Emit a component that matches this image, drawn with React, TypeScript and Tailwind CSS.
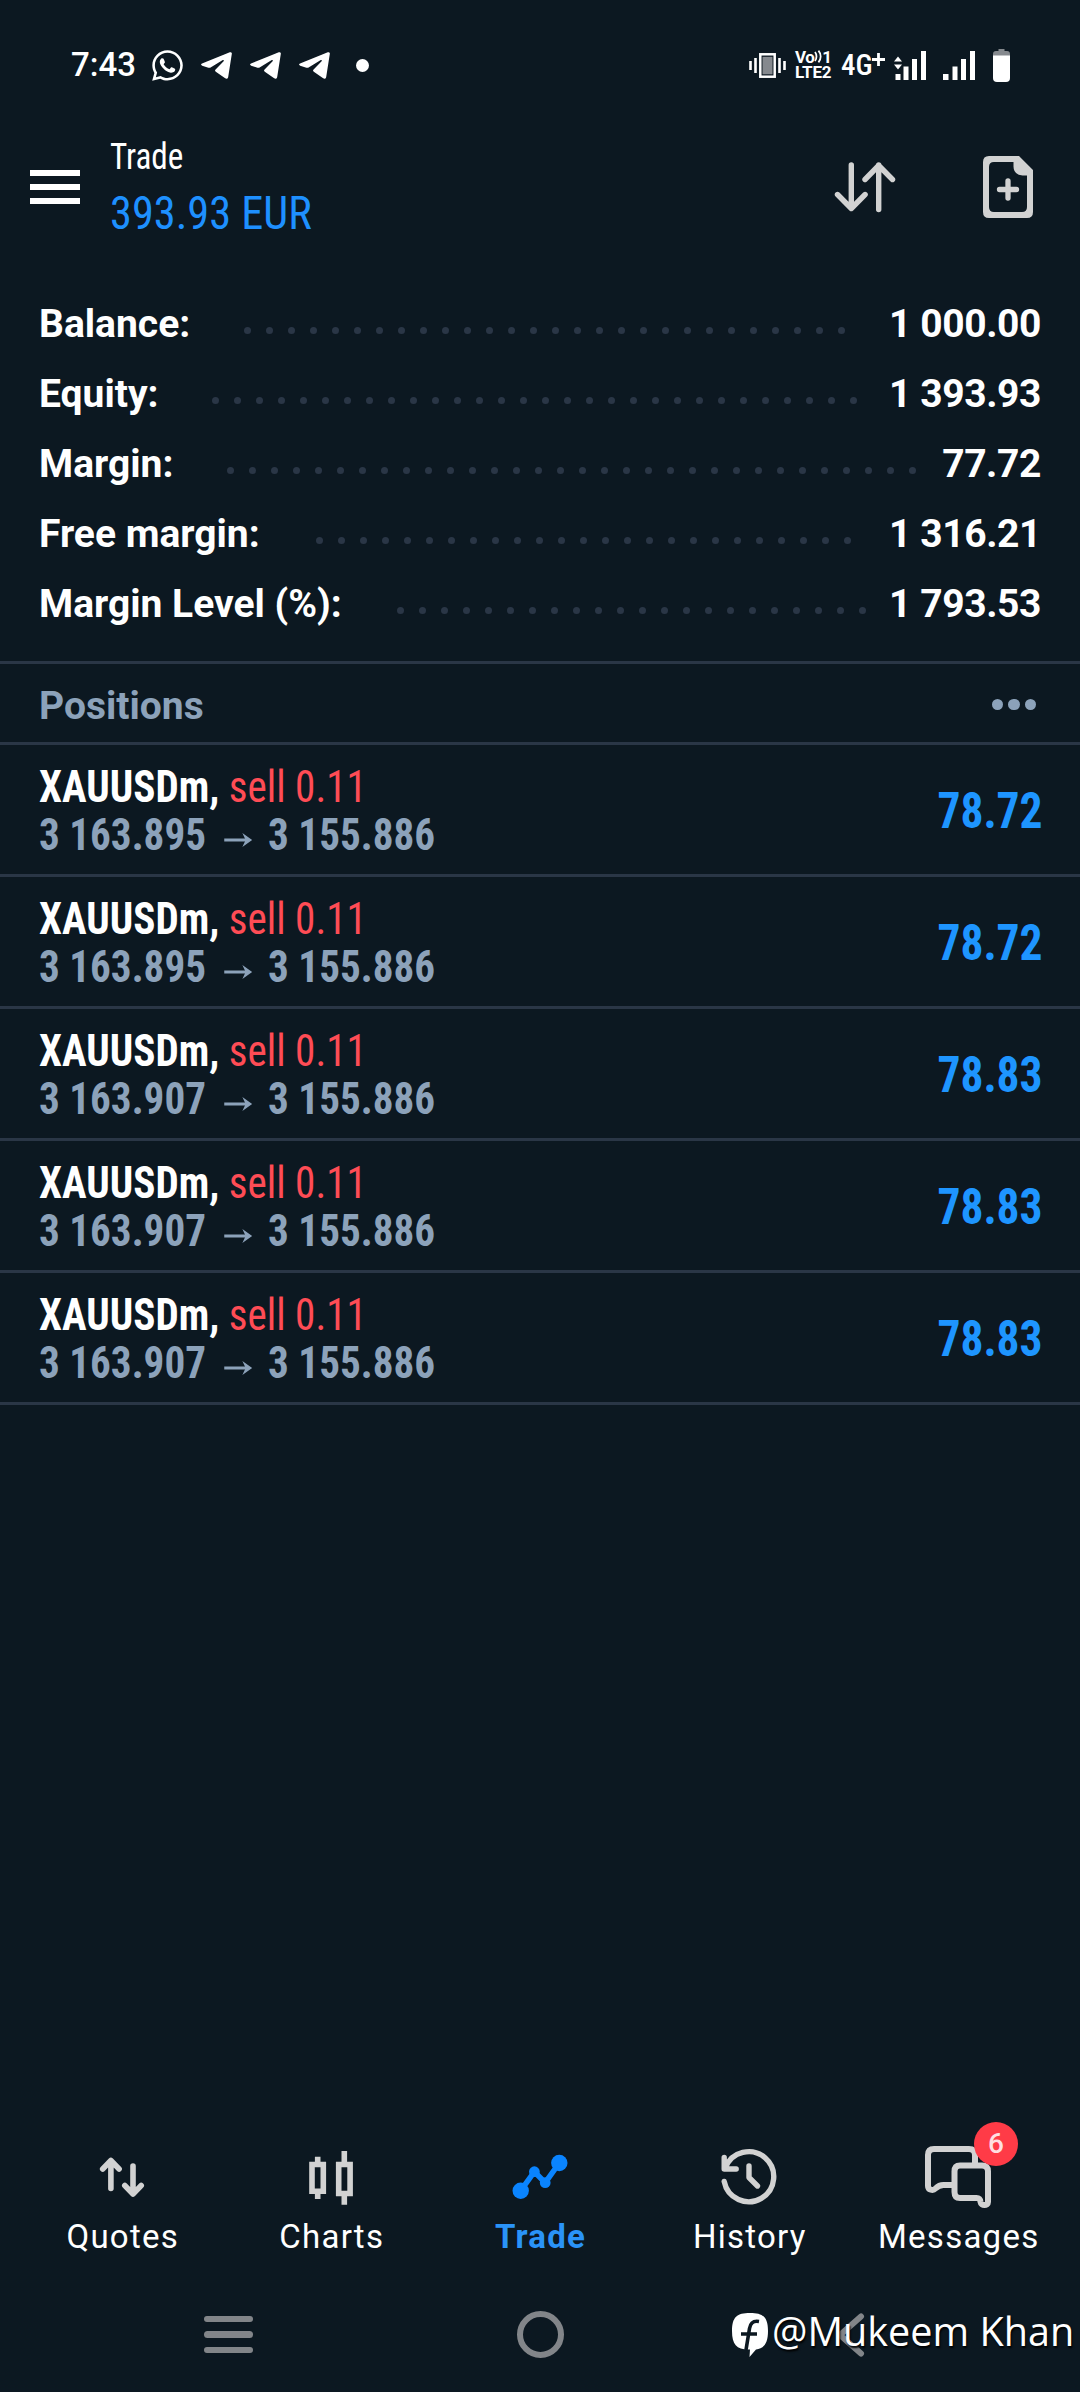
import React from 'react';
import { FaWhatsapp } from 'react-icons/fa';

interface SummaryItem {
  label: string;
  value: string;
  dots: number;
  labelWidth: string;
}

interface Position {
  id: number;
  symbol: string;
  volume: string;
  open: string;
  current: string;
  profit: string;
}

const summary: SummaryItem[] = [
  { label: 'Balance:', value: '1 000.00', dots: 28, labelWidth: 'w-[205px]' },
  { label: 'Equity:', value: '1 393.93', dots: 30, labelWidth: 'w-[173px]' },
  { label: 'Margin:', value: '77.72', dots: 32, labelWidth: 'w-[188px]' },
  { label: 'Free margin:', value: '1 316.21', dots: 25, labelWidth: 'w-[277px]' },
  { label: 'Margin Level (%):', value: '1 793.53', dots: 22, labelWidth: 'w-[358px]' },
];

const positions: Position[] = [
  { id: 1, symbol: 'XAUUSDm', volume: 'sell 0.11', open: '3 163.895', current: '3 155.886', profit: '78.72' },
  { id: 2, symbol: 'XAUUSDm', volume: 'sell 0.11', open: '3 163.895', current: '3 155.886', profit: '78.72' },
  { id: 3, symbol: 'XAUUSDm', volume: 'sell 0.11', open: '3 163.907', current: '3 155.886', profit: '78.83' },
  { id: 4, symbol: 'XAUUSDm', volume: 'sell 0.11', open: '3 163.907', current: '3 155.886', profit: '78.83' },
  { id: 5, symbol: 'XAUUSDm', volume: 'sell 0.11', open: '3 163.907', current: '3 155.886', profit: '78.83' },
];

const TelegramIcon = () => (
  <svg className="w-[31px] h-[27px]" viewBox="0 0 31 27" fill="#fff">
    <path d="M1 11.5 28.8.3c1.3-.5 2.3.4 2 1.8L27.2 25c-.3 1.7-1.6 2.2-3 1.3l-9.4-6.5c-1-.7-1-1.5-.2-2.4l8-8.2c.8-1-.2-1.6-1.2-.9L10 15.3c-.9.6-1.6.7-2.6.4l-6.2-2c-1.5-.5-1.5-1.6-.2-2.2Z" />
  </svg>
);

const VibrateIcon = () => (
  <svg className="w-[37px] h-[25px]" viewBox="0 0 37 25">
    <rect x="11.3" y="1.3" width="14.4" height="22.4" fill="#0c1821" stroke="#fff" strokeWidth="2.5" />
    <rect x="13.5" y="3.8" width="10" height="17.5" fill="#85898e" />
    <path d="M1.5 8v9M6.5 5v15M30.5 5v15M35.5 8v9" stroke="#fff" strokeWidth="2.6" />
  </svg>
);

const VolteIcon = () => (
  <div className="w-[37px] h-[30px] text-white font-bold text-[17px] leading-[15px]">
    <div className="flex h-[15px]">
      <span className="tracking-[-0.5px]">Vo</span>
      <svg className="w-[8px] h-[13px]" viewBox="0 0 8 13" fill="none" stroke="#fff" strokeWidth="1.8">
        <path d="M1 2c2 2.5 2 6.5 0 9M4.5.5c3 3.5 3 8.5 0 12" />
      </svg>
      <span>1</span>
    </div>
    <div className="h-[15px] tracking-[-0.2px]">LTE2</div>
  </div>
);

const SignalBars = ({ data = false }: { data?: boolean }) => (
  <svg className="w-[32px] h-[29px]" viewBox="0 0 32 29" fill="#fff">
    <path d={data ? 'M1.5 23h5v6h-5z' : 'M0 23h5.5v6H0z'} />
    <path d="M9.500 15.5h5V29h-5zM18 8h5v21h-5zM27 0h5v29h-5z" />
    {data && <path d="m4 5.500 4 5H0zM4 18.5l4-5H0z" />}
  </svg>
);

const BatteryIcon = () => (
  <svg className="w-[17px] h-[33px]" viewBox="0 0 17 33">
    <path d="M5.5 0h6v2H14q3 0 3 3v2H0V5q0-3 3-3h2.5Z" fill="#85898e" />
    <path d="M0 6.5h17V29q0 4-4 4H4q-4 0-4-4Z" fill="#fff" />
  </svg>
);

const StatusBar: React.FC = () => (
  <div className="h-[130px] pl-[71px] pr-[70px] flex items-center justify-between text-white">
    <div className="flex items-center">
      <span className="w-[81px] text-[33px] font-medium">7:43</span>
      <FaWhatsapp className="w-[35px] h-[35px] -ml-[2px] mr-[16px]" />
      <div className="flex gap-[18px]">
        <TelegramIcon />
        <TelegramIcon />
        <TelegramIcon />
      </div>
      <span className="w-[13px] h-[13px] rounded-full bg-white ml-[26px]" />
    </div>
    <div className="flex items-center">
      <VibrateIcon />
      <div className="ml-[9px]"><VolteIcon /></div>
      <div className="ml-[9px] w-[53px] flex text-[29px] leading-[34px]">
        <span className="w-[31px] font-medium [font-stretch:78%]">4G</span>
        <svg className="w-[13px] h-[13px] mt-[5px]" viewBox="0 0 13 13">
          <path d="M6.5 0v13M0 6.5h13" stroke="#fff" strokeWidth="2.8" />
        </svg>
      </div>
      <SignalBars data />
      <div className="ml-[17px] mr-[18px]"><SignalBars /></div>
      <BatteryIcon />
    </div>
  </div>
);

const Header: React.FC = () => (
  <div className="h-[159px] pl-[30px] pr-[47px] flex items-start">
    <div className="w-[50px] mt-[40px] flex flex-col gap-[8px]">
      <span className="h-[6px] bg-white" />
      <span className="h-[6px] bg-white" />
      <span className="h-[6px] bg-white" />
    </div>
    <div className="ml-[30px] mt-[6px] flex-1 [font-stretch:75%] font-[450]">
      <div className="text-[36px] leading-[42px] origin-left scale-x-[0.92] text-white">Trade</div>
      <div className="mt-[7px] text-[47px] leading-[56px] origin-left scale-x-[0.943] text-[#1e90ff]">393.93 EUR</div>
    </div>
    <svg className="w-[62px] h-[52px] mt-[31px]" viewBox="0 0 62 52" fill="none" stroke="#d2d2d2" strokeWidth="5.4" strokeLinecap="round" strokeLinejoin="round">
      <path d="M17.3 4v43M3.5 33.5l13.8 14 13.8-14M44.7 48.5V4M31 18.5 44.7 4.5l13.8 14" />
    </svg>
    <svg className="w-[50px] h-[62px] ml-[87px] mt-[26px]" viewBox="0 0 50 62">
      <path fillRule="evenodd" fill="#d2d2d2" d="M6 0h30l14 14v42q0 6-6 6H6q-6 0-6-6V6Q0 0 6 0ZM11 6q-5 0-5 5v40q0 5 5 5h28q5 0 5-5V19.5h-4.5q-9-1-9-9V6Z" />
      <path d="M25 25v17M16.5 33.5h17" stroke="#d2d2d2" strokeWidth="5.3" strokeLinecap="round" />
    </svg>
  </div>
);

const SummaryRow: React.FC<{ item: SummaryItem }> = ({ item }) => (
  <div className="h-[70px] flex items-center text-[39px] leading-[70px] font-bold text-white whitespace-nowrap">
    <div className={item.labelWidth}>{item.label}</div>
    <div className="flex gap-[15px] mt-[13px]">
      {Array.from({ length: item.dots }, (_, i) => (
        <span key={i} className="w-[7px] h-[7px] rounded-full bg-[#2a3646]" />
      ))}
    </div>
    <div className="ml-auto tracking-[-0.4px]">{item.value}</div>
  </div>
);

const PositionRow: React.FC<{ position: Position }> = ({ position }) => (
  <div className="h-[132px] pt-[18px] pl-[39px] pr-[37px] flex justify-between border-b-3 border-[#2a3646] [font-stretch:75%]">
    <div className="text-[44px] leading-[48px] font-[750] whitespace-nowrap origin-left scale-x-[0.935]">
      <div className="text-white">
        {position.symbol}, <span className="font-[430] text-[#ff4c55]">{position.volume}</span>
      </div>
      <div className="flex items-center text-[#8ca2ba]">
        <span className="w-[198px]">{position.open}</span>
        <svg className="w-[30px] h-[14px] mt-[10px] mr-[17px]" viewBox="0 0 30 14">
          <path d="M0 7h24" stroke="#8ca2ba" strokeWidth="3" />
          <path d="M19.5 0 30 7l-10.5 7L23 7z" fill="#8ca2ba" />
        </svg>
        <span>{position.current}</span>
      </div>
    </div>
    <div className="text-[50px] leading-[97px] origin-right scale-x-[0.91] font-[750] text-[#1e95ff]">{position.profit}</div>
  </div>
);

const QuotesIcon = () => (
  <svg className="w-[120px] h-[96px]" viewBox="0 0 120 96" fill="none" stroke="#d2d2d2" strokeWidth="5.6" strokeLinecap="round" strokeLinejoin="round">
    <path d="M48.9 68.5V40.5M40.7 49l8.2-8.5L57.1 49M71 46v28M62.8 65.5 71 74l8.2-8.5" />
  </svg>
);

const ChartsIcon = () => (
  <svg className="w-[120px] h-[96px]" viewBox="0 0 120 96" fill="none" stroke="#d2d2d2" strokeWidth="5.6">
    <path d="M41 44.5h11.3v26.7H41zM67.7 44.5h11.4v29H67.7z" />
    <path d="M46.7 36.7v6M46.7 73v6M73.3 31v12M73.3 74v10.7" />
  </svg>
);

const TradeIcon = () => (
  <svg className="w-[120px] h-[96px]" viewBox="0 0 120 96" fill="#0a84ff">
    <path d="M40.7 70.7 54.4 51.7 65.2 62.7 79.3 43" fill="none" stroke="#0a84ff" strokeWidth="5.5" />
    <circle cx="40.7" cy="70.7" r="8.2" />
    <circle cx="54.4" cy="51.7" r="5.4" />
    <circle cx="65.2" cy="62.7" r="5.4" />
    <circle cx="79.3" cy="43" r="8.2" />
  </svg>
);

const HistoryIcon = () => (
  <svg className="w-[120px] h-[96px]" viewBox="0 0 120 96" fill="none" stroke="#d2d2d2" strokeWidth="5.4" strokeLinecap="round" strokeLinejoin="round">
    <path d="M35.2 61.5A25 25 0 1 0 36.5 47.5M35.2 37.5V49h12" />
    <path d="M60 46v11.5l8.5 8.5" />
  </svg>
);

const MessagesIcon = () => (
  <svg className="w-[120px] h-[96px]" viewBox="0 0 120 96" fill="none" stroke="#d2d2d2" strokeWidth="6" strokeLinecap="round" strokeLinejoin="round">
    <path d="M77 43V35q0-6-6-6H36q-6 0-6 6v31c0 4 5 5 7.5 2.5 3-3 5-3.5 8-3.5h9" />
    <path d="M62 45.5h22q6 0 6 6V82c0 4-7 4-7.5 0-.3-3-1.5-4-4-4H62q-5.5 0-5.5-6V51.5q0-6 5.5-6Z" />
  </svg>
);

interface NavItem {
  label: string;
  icon: React.ReactNode;
  active?: boolean;
  badge?: number;
}

const navItems: NavItem[] = [
  { label: 'Quotes', icon: <QuotesIcon /> },
  { label: 'Charts', icon: <ChartsIcon /> },
  { label: 'Trade', icon: <TradeIcon />, active: true },
  { label: 'History', icon: <HistoryIcon /> },
  { label: 'Messages', icon: <MessagesIcon />, badge: 6 },
];

const BottomNav: React.FC = () => (
  <div className="h-[136px] px-[17.5px] grid grid-cols-5">
    {navItems.map((item) => (
      <div key={item.label} className="flex flex-col items-center">
        <div className="relative">
          {item.icon}
          {item.badge && (
            <span className="absolute right-0 top-[2px] w-[44px] h-[44px] rounded-full bg-[#ff3b47] text-[#ffdfe1] text-[28px] leading-[44px] font-medium text-center">
              {item.badge}
            </span>
          )}
        </div>
        <span className={item.active ? 'pt-px pl-px text-[33px] leading-[40px] tracking-[1.2px] font-bold text-[#2a93f8]' : 'pt-px pl-[1.5px] text-[33px] leading-[40px] tracking-[1.25px] text-white'}>
          {item.label}
        </span>
      </div>
    ))}
  </div>
);

const SystemNav: React.FC = () => (
  <div className="relative h-[136px] px-[72px] pt-[21px] grid grid-cols-3 items-center justify-items-center">
    <div className="w-[49px] flex flex-col gap-[9px]">
      <span className="h-[6.5px] rounded-full bg-[#828589]" />
      <span className="h-[6.5px] rounded-full bg-[#828589]" />
      <span className="h-[6.5px] rounded-full bg-[#828589]" />
    </div>
    <div className="w-[47px] h-[47px] rounded-full border-[6px] border-[#828589]" />
    <svg className="w-[32px] h-[44px]" viewBox="0 0 32 44" fill="none" stroke="#828589" strokeWidth="6" strokeLinecap="round" strokeLinejoin="round">
      <path d="M25 3.5 4 22l21 18.5" />
    </svg>
    {/* author tag over the back button */}
    <div className="absolute left-[732px] top-[46px] flex items-center text-white whitespace-nowrap">
      <svg className="w-[36px] h-[44px] mt-[10px]" viewBox="0 0 36 44">
        <path d="M18 0C31 0 36 4 36 18c0 12-4 17.5-12 18.5L17.5 44l.5-7.5C5 37 0 32 0 18 0 4 5 0 18 0Z" fill="#fff" />
        <path d="M27 8.5c-6-1-8.5 1.5-9.5 7L14 37M9 21h16" fill="none" stroke="#0c1821" strokeWidth="3.6" />
      </svg>
      <span className="ml-[4px] font-['Open_Sans'] font-normal text-[41px] leading-[56px] origin-left scale-x-[0.965] [text-shadow:1px_2px_2px_#000]">@Mukeem Khan</span>
    </div>
  </div>
);

const App: React.FC = () => {
  return (
    <div className="w-[1080px] h-[2392px] flex flex-col bg-[#0c1821] font-[Roboto,sans-serif] overflow-hidden">
      <StatusBar />
      <Header />
      <div className="pl-[39px] pr-[39px] pb-[22px]">
        {summary.map((item) => (
          <SummaryRow key={item.label} item={item} />
        ))}
      </div>
      <div className="h-[84px] pl-[39px] pr-[44px] pt-[6px] flex items-center justify-between border-y-3 border-[#2a3646]">
        <span className="text-[39px] font-bold text-[#8ca2ba]">Positions</span>
        <div className="flex gap-[5px] mb-[3px]">
          <span className="w-[11.5px] h-[11.5px] rounded-full bg-[#8ca2ba]" />
          <span className="w-[11.5px] h-[11.5px] rounded-full bg-[#8ca2ba]" />
          <span className="w-[11.5px] h-[11.5px] rounded-full bg-[#8ca2ba]" />
        </div>
      </div>
      {positions.map((position) => (
        <PositionRow key={position.id} position={position} />
      ))}
      <div className="mt-auto">
        <BottomNav />
        <SystemNav />
      </div>
    </div>
  );
};

export default App;
